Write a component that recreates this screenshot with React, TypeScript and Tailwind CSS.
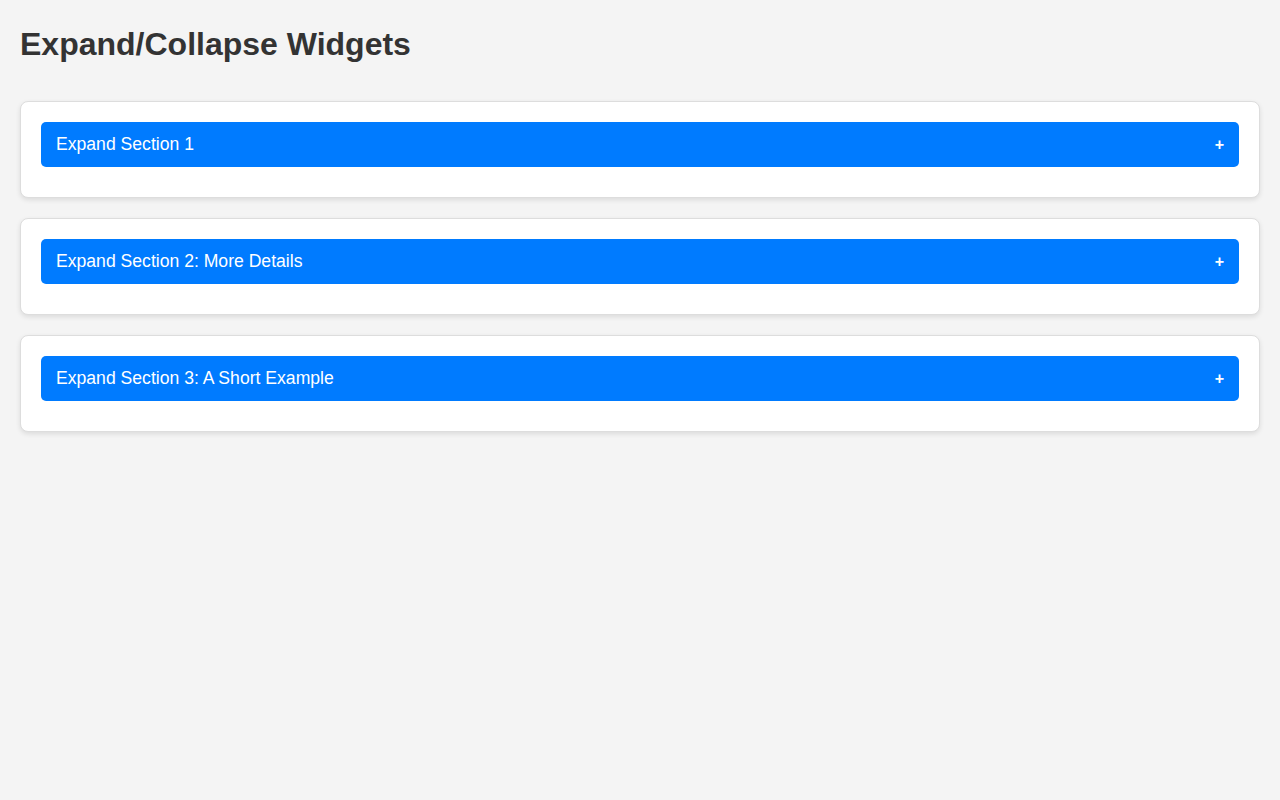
import { useState } from 'react';

const sections = [
  { title: 'Expand Section 1', body: 'This is the content of section 1.' },
  { title: 'Expand Section 2: More Details', body: 'More details live here.' },
  { title: 'Expand Section 3: A Short Example', body: 'A short example.' },
];

function Widget({ title, body }: { title: string; body: string }) {
  const [open, setOpen] = useState(false);

  return (
    <div className="rounded-lg border border-[#dddddd] bg-white p-5 pb-[30px] shadow-[0_2px_5px_rgba(0,0,0,0.1)]">
      <button
        onClick={() => setOpen(!open)}
        className="flex h-[45px] w-full items-center justify-between rounded-[5px] bg-[#007bff] px-[15px] text-left text-[17.6px] text-white"
      >
        <span>{title}</span>
        <span className="text-base font-bold">{open ? '−' : '+'}</span>
      </button>
      {open && <div className="pt-3 text-[#333]">{body}</div>}
    </div>
  );
}

export default function App() {
  return (
    <div className="min-h-screen bg-[#f4f4f4] px-5 pt-[26px] font-['Liberation_Sans',Arial,sans-serif] text-[#333]">
      <h1 className="mb-[38px] text-[32px] leading-[37px] font-bold">Expand/Collapse Widgets</h1>

      <div className="flex flex-col gap-5">
        {sections.map((s) => (
          <Widget key={s.title} title={s.title} body={s.body} />
        ))}
      </div>
    </div>
  );
}
